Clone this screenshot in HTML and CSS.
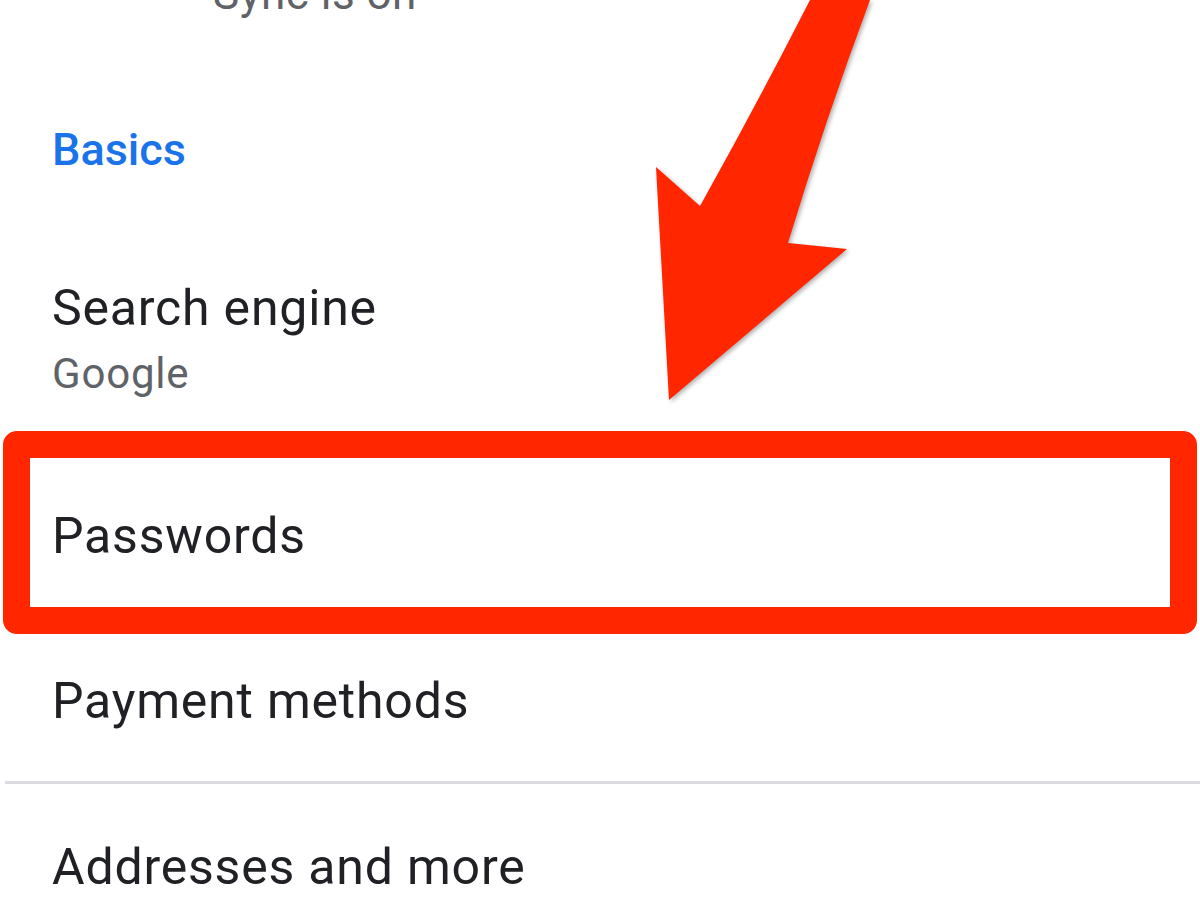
FILE: index.html
```html
<!DOCTYPE html>
<html>
<head>
<meta charset="utf-8">
<link rel="stylesheet" href="styles.css">
</head>
<body>
<div class="page">
  <div class="sync-sub">Sync is on</div>
  <div class="section-header">Basics</div>
  <div class="row two-line">
    <div class="row-title">Search engine</div>
    <div class="row-sub">Google</div>
  </div>
  <div class="row highlighted">
    <div class="row-title">Passwords</div>
    <div class="frame"></div>
  </div>
  <div class="row payment">
    <div class="row-title">Payment methods</div>
  </div>
  <div class="divider"></div>
  <div class="row addresses">
    <div class="row-title">Addresses and more</div>
  </div>
  <svg class="arrow" width="1200" height="900" viewBox="0 0 1200 900">
    <path d="M810,0 L870,0 Q826,118 788,243 L847,249 L669,400 L656,167 L700,206 Q757,104 810,0 Z" fill="#ff2600"/>
  </svg>
</div>
</body>
</html>
```

FILE: styles.css
```css
html, body {
  margin: 0;
  padding: 0;
  background: #ffffff;
}
.page {
  position: relative;
  width: 1200px;
  height: 900px;
  overflow: hidden;
  font-family: Roboto, "Noto Sans", sans-serif;
}
.sync-sub {
  margin-top: -32px;
  padding-left: 213px;
  font-size: 44px;
  line-height: 52px;
  letter-spacing: 0.5px;
  color: #5f6368;
}
.section-header {
  margin-top: 102px;
  padding-left: 52px;
  font-size: 45px;
  line-height: 56px;
  font-weight: 500;
  color: #1a73e8;
}
.row {
  padding-left: 52px;
}
.row-title {
  font-size: 50px;
  line-height: 58px;
  letter-spacing: 0.8px;
  color: #202124;
}
.row-sub {
  margin-top: 12px;
  font-size: 42px;
  line-height: 50px;
  letter-spacing: 0.8px;
  color: #5f6368;
}
.two-line {
  padding-top: 101px;
}
.highlighted {
  position: relative;
  margin-top: 32px;
  padding-top: 76px;
  padding-bottom: 69px;
}
.frame {
  position: absolute;
  left: 3px;
  right: 3px;
  top: 0;
  bottom: 0;
  border: 27px solid #ff2600;
  border-radius: 14px;
  box-sizing: border-box;
}
.payment {
  margin-top: 38px;
}
.divider {
  margin-top: 51px;
  margin-left: 5px;
  height: 3px;
  background: #dadce0;
}
.addresses {
  margin-top: 54px;
}
.arrow {
  position: absolute;
  left: 0;
  top: 0;
  filter: drop-shadow(2px 2px 2px rgba(0, 0, 0, 0.3));
}
```
